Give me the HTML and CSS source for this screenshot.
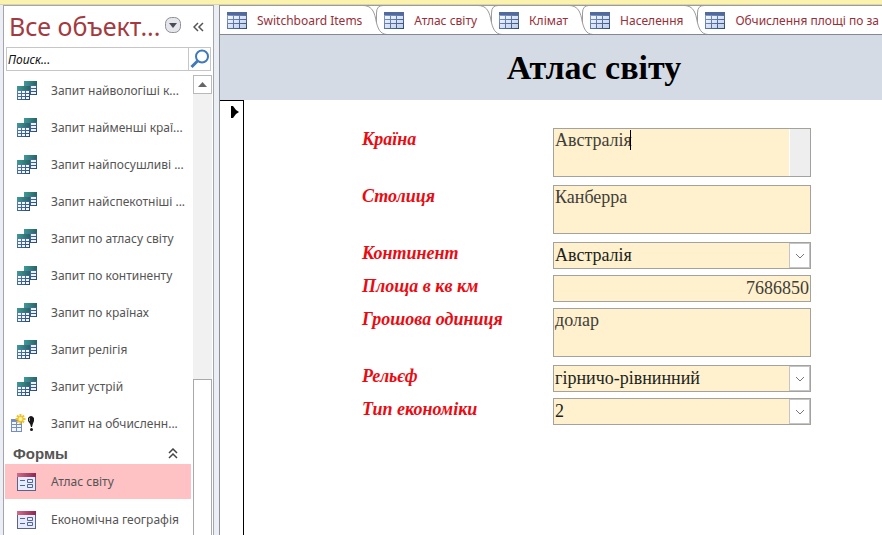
FILE: index.html
```
<!DOCTYPE html>
<html lang="uk">
<head>
<meta charset="utf-8">
<title>Атлас світу</title>
<link rel="stylesheet" href="styles.css">
</head>
<body>
<svg class="defs" aria-hidden="true">
  <defs>
    <linearGradient id="teal" x2="1"><stop offset="0" stop-color="#3e9c95"/><stop offset="1" stop-color="#286464"/></linearGradient>
    <linearGradient id="navy" x2="1" y2="1"><stop offset="0" stop-color="#638fb7"/><stop offset="1" stop-color="#26477a"/></linearGradient>
    <linearGradient id="wine" x2="1"><stop offset="0" stop-color="#d16c8c"/><stop offset="1" stop-color="#8c2750"/></linearGradient>
    <linearGradient id="blue" x2="1" y2="1"><stop offset="0" stop-color="#8ba5dc"/><stop offset="1" stop-color="#30486f"/></linearGradient>
    <linearGradient id="cells" x2="1" y2="1"><stop offset="0" stop-color="#f4f8ff"/><stop offset="1" stop-color="#bdcdec"/></linearGradient>
    <symbol id="query" viewBox="0 0 20 20">
      <path fill="url(#navy)" d="M7 0h13v14H7z"/><path fill="url(#teal)" d="M7 0h13v4H7z"/>
      <path fill="#eaf2fb" d="M8 5h5v8H8zM14 5h5v2h-5zM14 8h5v2h-5zM14 11h5v2h-5z"/>
      <path fill="url(#navy)" d="M0 5h13v14H0z"/><path fill="url(#teal)" d="M0 5h13v4H0z"/>
      <path fill="#f1f6fc" d="M1 10h3v2H1zM5 10h3v2H5zM9 10h3v2H9zM1 13h3v2H1zM5 13h3v2H5zM9 13h3v2H9zM1 16h3v2H1zM5 16h3v2H5zM9 16h3v2H9z"/>
    </symbol>
    <symbol id="form" viewBox="0 0 20 18">
      <path fill="#5b638d" d="M0 0h19v18H0z"/><path fill="#e6ecfa" d="M1 4h17v13H1z"/><path fill="url(#wine)" d="M0 0h19v4H0z"/>
      <path fill="none" stroke="#52649a" d="M3 7.500h5M3 12.500h5M10.500 6.500h5v3h-5zM10.500 11.500h5v3h-5z"/>
    </symbol>
    <symbol id="table" viewBox="0 0 20 17">
      <path fill="url(#blue)" d="M0 0h20v17H0z"/><path fill="#526a9b" d="M0 0h20v3H0z"/>
      <path fill="url(#cells)" d="M1 4h5v3H1zM7 4h5v3H7zM13 4h6v3h-6zM1 8h5v3H1zM7 8h5v3H7zM13 8h6v3h-6zM1 12h5v4H1zM7 12h5v4H7zM13 12h6v4h-6z"/>
    </symbol>
    <symbol id="make" viewBox="0 0 24 20">
      <path fill="#738dc5" d="M0 5h11v13H0z"/><path fill="#f4f7ff" d="M1 8h4v2H1zM6 8h4v2H6zM1 11h4v2H1zM6 11h4v2H6zM1 14h4v3H1zM6 14h4v3H6z"/>
      <path stroke="#edc22d" stroke-width="2" d="M9.500 0v10M4.500 5h10M6 1.500l7 7M13 1.500l-7 7"/><circle cx="9.500" cy="5" r="2" fill="#fff6a4"/>
      <path fill="#171717" d="M17 4q3-4 6 0v3q-1 2-2 6h-1q-1-4-3-6z"/><circle cx="20.500" cy="15.500" r="1.500" fill="#171717"/><path stroke="#999" d="M18.500 4v3"/>
    </symbol>
    <symbol id="slope" viewBox="0 0 26 30">
      <path fill="#fff" d="M0 1C8 1 11 6 12 13C14 24 16 28 24 29H0z"/>
      <path fill="none" stroke="#9b9b9b" d="M0 .5C8 .5 11 6 12.500 13C14.500 24 17 29 24 29.500M13.500 17V8Q13.500 .5 20 .5"/>
    </symbol>
  </defs>
</svg>
<div class="message-bar"></div>
<div class="workspace">
  <nav class="sidebar" aria-label="Все объекты">
    <div class="nav-head">
      <h2>Все объект...</h2>
      <button class="round" aria-label="Фильтр"><svg viewBox="0 0 16 16"><rect x=".5" y=".5" width="15" height="15" rx="6" fill="#e5e6eb" stroke="#8d8f98"/><path fill="#484c55" d="M4 6h8l-4 5z"/></svg></button>
      <button class="collapse" aria-label="Свернуть"><svg viewBox="0 0 11 10"><path d="M5 1L1 5l4 4M10 1L6 5l4 4"/></svg></button>
    </div>
    <div class="search">
      <input type="text" value="Поиск..." aria-label="Поиск">
      <button aria-label="Найти"><svg viewBox="0 0 20 20"><circle cx="12" cy="7.500" r="6" fill="none" stroke="#4079b8" stroke-width="2"/><path stroke="#4079b8" stroke-width="3" d="M7.500 12L1.500 18"/></svg></button>
    </div>
    <div class="nav-body">
      <div class="nav-list">
        <a href="#"><svg><use href="#query"/></svg>Запит найвологіші к...</a>
        <a href="#"><svg><use href="#query"/></svg>Запит найменші краї...</a>
        <a href="#"><svg><use href="#query"/></svg>Запит найпосушливі ...</a>
        <a href="#"><svg><use href="#query"/></svg>Запит найспекотніші ...</a>
        <a href="#"><svg><use href="#query"/></svg>Запит по атласу світу</a>
        <a href="#"><svg><use href="#query"/></svg>Запит по континенту</a>
        <a href="#"><svg><use href="#query"/></svg>Запит по країнах</a>
        <a href="#"><svg><use href="#query"/></svg>Запит релігія</a>
        <a href="#"><svg><use href="#query"/></svg>Запит устрій</a>
        <a href="#" class="wide"><svg><use href="#make"/></svg>Запит на обчисленн...</a>
        <h3>Формы<svg viewBox="0 0 10 11"><path d="M1 5l4-4 4 4M1 10l4-4 4 4"/></svg></h3>
        <a href="#" class="selected"><svg><use href="#form"/></svg>Атлас світу</a>
        <a href="#"><svg><use href="#form"/></svg>Економічна географія</a>
      </div>
      <div class="scroll">
        <button aria-label="Вверх"><svg viewBox="0 0 9 5"><path d="M0 5L4.500 0L9 5z"/></svg></button>
        <div class="thumb"></div>
      </div>
    </div>
  </nav>
  <main class="document">
    <div class="tabs">
      <a href="#"><svg class="icon"><use href="#table"/></svg>Switchboard Items<svg class="slope"><use href="#slope"/></svg></a>
      <a href="#"><svg class="icon"><use href="#table"/></svg>Атлас світу<svg class="slope"><use href="#slope"/></svg></a>
      <a href="#"><svg class="icon"><use href="#table"/></svg>Клімат<svg class="slope"><use href="#slope"/></svg></a>
      <a href="#"><svg class="icon"><use href="#table"/></svg>Населення<svg class="slope"><use href="#slope"/></svg></a>
      <a href="#"><svg class="icon"><use href="#table"/></svg>Обчислення площі по за</a>
    </div>
    <header class="form-head"><h1>Атлас світу</h1></header>
    <div class="record">
      <div class="selector"><svg viewBox="0 0 8 12"><path d="M0 0h2l3 4 3 2-3 2-3 4H0z"/></svg></div>
      <form>
        <div class="row tall"><label for="country">Країна</label><div class="field"><textarea id="country">Австралія</textarea><span class="caret"></span><span class="gutter"></span></div></div>
        <div class="row tall"><label for="capital">Столиця</label><div class="field"><textarea id="capital">Канберра</textarea></div></div>
        <div class="row"><label for="continent">Континент</label><div class="field"><select id="continent"><option>Австралія</option></select><span class="arrow"><svg viewBox="0 0 10 6"><path d="M1 1l4 4 4-4"/></svg></span></div></div>
        <div class="row"><label for="area">Площа в кв км</label><div class="field"><input id="area" class="number" type="text" value="7686850"></div></div>
        <div class="row tall"><label for="currency">Грошова одиниця</label><div class="field"><textarea id="currency">долар</textarea></div></div>
        <div class="row"><label for="relief">Рельєф</label><div class="field"><select id="relief"><option>гірничо-рівнинний</option></select><span class="arrow"><svg viewBox="0 0 10 6"><path d="M1 1l4 4 4-4"/></svg></span></div></div>
        <div class="row"><label for="economy">Тип економіки</label><div class="field"><select id="economy"><option>2</option></select><span class="arrow"><svg viewBox="0 0 10 6"><path d="M1 1l4 4 4-4"/></svg></span></div></div>
      </form>
    </div>
  </main>
</div>
</body>
</html>
```
FILE: styles.css
```
* { box-sizing: border-box; }
body {
  margin: 0;
  height: 100vh;
  display: flex;
  flex-direction: column;
  overflow: hidden;
  background: #eceef5;
  font-family: "Noto Sans", "Open Sans", sans-serif;
  font-size: 12px;
}
h1, h2, h3 { margin: 0; }
a { color: inherit; text-decoration: none; }
button { padding: 0; border: 0; background: none; display: grid; place-items: center; }
.defs { position: absolute; width: 0; height: 0; }
.message-bar { flex: none; height: 5px; background: #fbf3ad; border-bottom: 1px solid #d9d4ab; }
.workspace { flex: 1; min-height: 0; display: flex; gap: 5px; padding-left: 3px; }

.sidebar {
  flex: none;
  width: 211px;
  display: flex;
  flex-direction: column;
  background: #fff;
  border: 1px solid #a5a6ad;
  border-bottom: 0;
}
.nav-head { display: flex; align-items: center; height: 41px; padding: 0 9px 0 5px; }
.nav-head h2 { flex: 1; min-width: 0; font-size: 25px; font-weight: 400; line-height: 41px; color: #a33a40; white-space: nowrap; }
.round svg { display: block; width: 16px; height: 16px; }
.nav-head .round { padding-bottom: 3px; }
.collapse { margin-left: 12px; }
.collapse svg { width: 11px; height: 10px; fill: none; stroke: #555; stroke-width: 1.5; }
.search { display: flex; height: 24px; margin: 0 2px; border: 1px solid #c6c6c6; }
.search input { flex: 1; min-width: 0; border: 0; padding: 0 1px; font: italic 12px "Noto Sans", sans-serif; color: #111; outline: 0; }
.search button { width: 22px; border-left: 1px solid #c6c6c6; }
.search svg { width: 20px; height: 20px; }
.nav-body { flex: 1; min-height: 0; display: flex; overflow: hidden; }
.nav-list { flex: 1; min-width: 0; padding: 1px 0 0 1px; color: #555; }
.nav-list a { display: flex; align-items: center; height: 37px; padding-left: 12px; gap: 14px; white-space: nowrap; }
.nav-list a svg { flex: none; width: 20px; height: 20px; }
.nav-list a.wide { padding-left: 6px; gap: 16px; }
.nav-list a.wide svg { width: 24px; }
.nav-list .selected { background: #fec1c4; height: 35px; margin-bottom: 2px; }
.nav-list h3 { display: flex; justify-content: space-between; align-items: center; height: 22px; padding: 0 13px 0 8px; font: bold 15px "Liberation Sans", sans-serif; color: #555; }
.nav-list h3 svg { width: 10px; height: 11px; fill: none; stroke: #444; stroke-width: 1.5; }
.scroll { flex: none; width: 19px; margin: 4px 1px 0 2px; display: flex; flex-direction: column; background: #f1f1f1; }
.scroll button { height: 19px; border: 1px solid #b9b9b9; background: #fff; }
.scroll svg { width: 9px; height: 5px; fill: #666; }
.scroll .thumb { flex: 1; margin-top: 285px; border: 1px solid #a9a9a9; border-bottom: 0; background: #fff; }

.document { flex: 1; min-width: 0; display: flex; flex-direction: column; background: #fff; border-left: 1px solid #8c8f96; }
.tabs { flex: none; display: flex; height: 30px; overflow: hidden; border-top: 1px solid #9b9b9b; border-bottom: 1px solid #85898f; color: #963039; }
.tabs a { position: relative; flex: none; display: flex; align-items: center; gap: 10px; padding: 0 15px 0 7px; white-space: nowrap; }
.tabs a:last-child { padding-right: 0; }
.tabs .icon { width: 20px; height: 17px; }
.tabs .slope { position: absolute; top: -1px; right: -12px; width: 26px; height: 30px; }
.form-head { flex: none; height: 65px; padding-left: 86px; background: #d5dbe5; text-align: center; }
.form-head h1 { font: bold 34px/66px "Liberation Serif", serif; white-space: nowrap; }
.record { flex: 1; min-height: 0; display: flex; }
.selector { flex: none; width: 24px; padding: 5px 4px 0 0; border-top: 1px solid #000; border-right: 1px solid #000; line-height: 12px; text-align: right; }
.selector svg { width: 8px; height: 12px; }
form { flex: 1; padding: 28px 71px 0 118px; }
.row { display: grid; grid-template-columns: 191px minmax(0, 1fr); height: 27px; margin-bottom: 6px; }
.row.tall { height: 49px; margin-bottom: 8px; }
.row label { font: italic bold 18px/22px "Liberation Serif", serif; color: #ea0b12; white-space: nowrap; }
.field { position: relative; display: flex; }
.field textarea, .field input, .field select {
  width: 100%;
  height: 100%;
  margin: 0;
  padding: 0 1px 1px;
  appearance: none;
  resize: none;
  overflow: hidden;
  border: 1px solid #a3a29d;
  border-radius: 0;
  outline: 0;
  background: #fff0ce;
  color: #403e38;
  font: 18px/22px "Liberation Serif", serif;
}
.field select { padding-bottom: 2px; color: #201f1c; }
.field .number { text-align: right; }
.caret { position: absolute; left: 77px; top: 2px; width: 1px; height: 20px; background: #000; }
.gutter { position: absolute; right: 1px; top: 1px; bottom: 1px; width: 21px; background: #eee; border-left: 1px solid #fff; }
.arrow { position: absolute; right: 1px; top: 1px; bottom: 1px; width: 21px; display: grid; place-items: center; background: #fff; border: 1px solid #c5c5c5; pointer-events: none; }
.arrow svg { width: 10px; height: 6px; fill: none; stroke: #777; }
```
